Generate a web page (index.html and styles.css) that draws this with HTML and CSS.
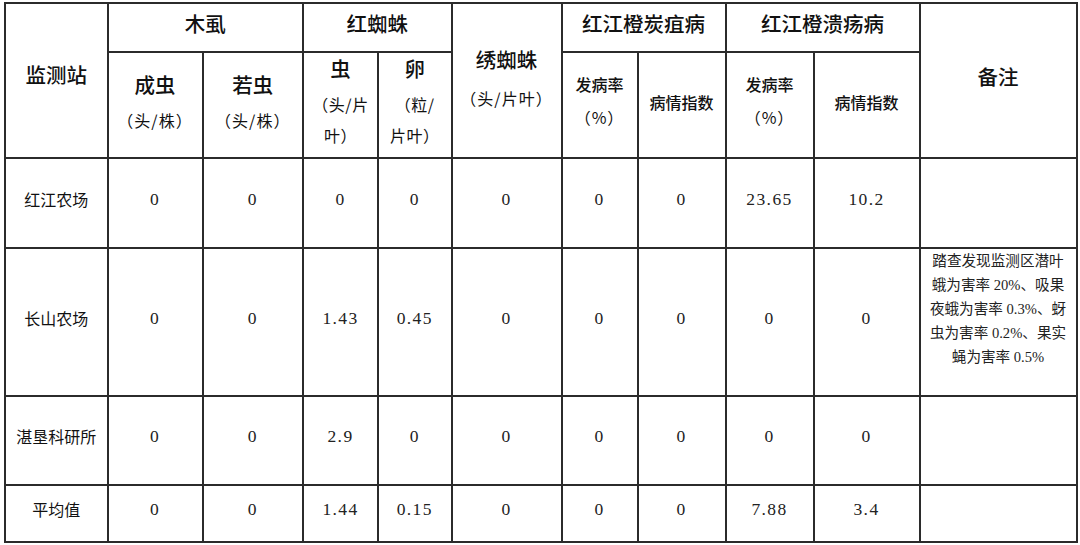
FILE: index.html
```html
<!DOCTYPE html>
<html lang="zh-CN">
<head>
<meta charset="utf-8">
<title>监测表</title>
<link rel="stylesheet" href="styles.css">
</head>
<body>
<table class="grid">
  <colgroup>
    <col class="c1"><col class="c2"><col class="c3"><col class="c4"><col class="c5"><col class="c6"><col class="c7"><col class="c8"><col class="c9"><col class="c10"><col class="c11">
  </colgroup>
  <thead>
    <tr class="h1">
      <th rowspan="2" class="tall"><div class="big">监测站</div></th>
      <th colspan="2"><div class="big">木虱</div></th>
      <th colspan="2"><div class="big">红蜘蛛</div></th>
      <th rowspan="2" class="tall rust"><div class="big">绣蜘蛛</div><div class="sub gap9">（头/片叶）</div></th>
      <th colspan="2"><div class="big">红江橙炭疽病</div></th>
      <th colspan="2"><div class="big">红江橙溃疡病</div></th>
      <th rowspan="2" class="tall note-h"><div class="big">备注</div></th>
    </tr>
    <tr class="h2">
      <th class="pair"><div class="big">成虫</div><div class="sub gap6">（头/株）</div></th>
      <th class="pair"><div class="big">若虫</div><div class="sub gap6">（头/株）</div></th>
      <th class="stack"><div class="big">虫</div><div class="sub narrow gap6">（头/片<br>叶）</div></th>
      <th class="stack"><div class="big">卵</div><div class="sub narrow gap6">（粒/<br>片叶）</div></th>
      <th class="rate"><div class="mid">发病率</div><div class="sub gap3">（%）</div></th>
      <th class="index"><div class="mid">病情指数</div></th>
      <th class="rate"><div class="mid">发病率</div><div class="sub gap3">（%）</div></th>
      <th class="index"><div class="mid">病情指数</div></th>
    </tr>
  </thead>
  <tbody>
    <tr class="r1">
      <td class="name">红江农场</td>
      <td class="num">0</td><td class="num">0</td><td class="num">0</td><td class="num">0</td><td class="num">0</td><td class="num">0</td><td class="num">0</td><td class="num">23.65</td><td class="num">10.2</td>
      <td class="num"></td>
    </tr>
    <tr class="r2">
      <td class="name">长山农场</td>
      <td class="num">0</td><td class="num">0</td><td class="num">1.43</td><td class="num">0.45</td><td class="num">0</td><td class="num">0</td><td class="num">0</td><td class="num">0</td><td class="num">0</td>
      <td class="note">踏查发现监测区潜叶<br>蛾为害率 20%、吸果<br>夜蛾为害率 0.3%、蚜<br>虫为害率 0.2%、果实<br>蝇为害率 0.5%</td>
    </tr>
    <tr class="r3">
      <td class="name">湛垦科研所</td>
      <td class="num">0</td><td class="num">0</td><td class="num">2.9</td><td class="num">0</td><td class="num">0</td><td class="num">0</td><td class="num">0</td><td class="num">0</td><td class="num">0</td>
      <td class="num"></td>
    </tr>
    <tr class="r4">
      <td class="name">平均值</td>
      <td class="num">0</td><td class="num">0</td><td class="num">1.44</td><td class="num">0.15</td><td class="num">0</td><td class="num">0</td><td class="num">0</td><td class="num">7.88</td><td class="num">3.4</td>
      <td class="num"></td>
    </tr>
  </tbody>
</table>
</body>
</html>
```

FILE: styles.css
```css
html, body {
  margin: 0;
  padding: 0;
  background: #ffffff;
}
body {
  padding: 2px 0 0 4px;
  font-family: "Noto Sans CJK SC", "Liberation Sans", sans-serif;
  color: #111;
  text-spacing-trim: space-all;
}
.grid {
  border-collapse: collapse;
  table-layout: fixed;
  width: 1072px;
}
.grid th, .grid td {
  border: 2px solid #2b2b2b;
  padding: 0;
  text-align: center;
  font-weight: 400;
}
.c1 { width: 102.5px; }
.c2 { width: 95px; }
.c3 { width: 100.5px; }
.c4 { width: 75px; }
.c5 { width: 73.5px; }
.c6 { width: 110px; }
.c7 { width: 76px; }
.c8 { width: 88px; }
.c9 { width: 88px; }
.c10 { width: 106px; }
.c11 { width: 157px; }

.h1 { height: 49px; }
.h2 { height: 106px; }
.r1 { height: 90px; }
.r2 { height: 148px; }
.r3 { height: 89px; }
.r4 { height: 57px; }

.grid th { vertical-align: top; }
.h1 th { padding-top: 4px; }
.h1 th.tall { padding-top: 55px; }
.h1 th.rust { padding-top: 40px; }
.h1 th.note-h { padding-top: 57px; }

.big {
  font-size: 20.5px;
  line-height: 30px;
  color: #111;
  font-weight: 500;
}
.mid {
  font-size: 16px;
  line-height: 30px;
  font-weight: 500;
}
.sub {
  font-size: 16px;
  line-height: 30px;
  letter-spacing: 1px;
}
.sub.narrow { line-height: 31px; letter-spacing: 0.5px; }
.gap9 { margin-top: 9px; }
.gap6 { margin-top: 6px; }
.gap3 { margin-top: 3px; }

.h2 th.pair { padding-top: 16px; }
.h2 th.stack { padding-top: 0; }
.h2 th.rate { padding-top: 16px; }
.h2 th.index { padding-top: 34px; }

.grid td {
  vertical-align: middle;
  padding-bottom: 9px;
}
.name {
  font-size: 16px;
  line-height: 30px;
  font-weight: 500;
}
.num {
  font-family: "Liberation Serif", "DejaVu Serif", serif;
  font-size: 17.5px;
  line-height: 30px;
  letter-spacing: 1.4px;
  color: #222;
}
.grid td.note {
  vertical-align: top;
  padding: 0;
  font-family: "Liberation Serif", "Noto Sans CJK SC", serif;
  font-size: 14.6px;
  line-height: 24px;
  color: #222;
}
```
